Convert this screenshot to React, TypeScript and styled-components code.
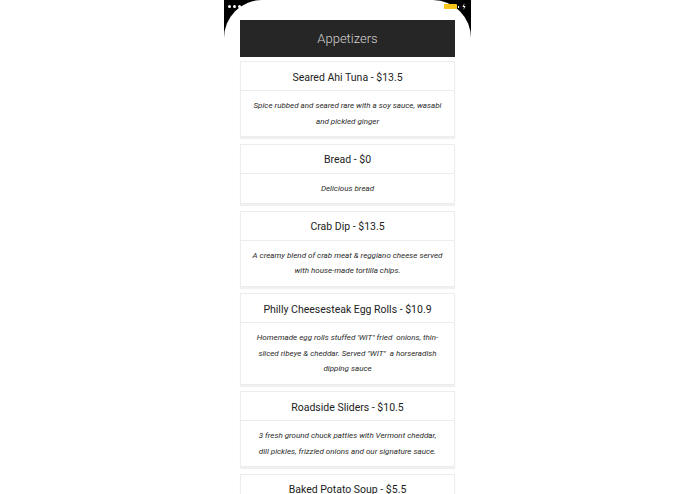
import React from "react";
import styled, { createGlobalStyle } from "styled-components";

const Global = createGlobalStyle`
  html, body { margin: 0; padding: 0; background: #ffffff; }
  body { font-family: Roboto, "Liberation Sans", Arial, sans-serif; }
  * { box-sizing: border-box; }
`;

const Page = styled.div`
  width: 695px;
  height: 494px;
  overflow: hidden;
  display: flex;
  justify-content: center;
`;

const Phone = styled.div`
  width: 247px;
  height: 494px;
  background: linear-gradient(#000 0, #000 40px, #fff 40px);
  position: relative;
`;

const Screen = styled.div`
  height: 100%;
  background: #fff;
  border-radius: 38px 38px 0 0;
  padding: 20px 16px 0 16px;
  display: flex;
  flex-direction: column;
`;

const StatusLeft = styled.div`
  position: absolute;
  left: 4px;
  top: 5px;
  display: flex;
  gap: 2px;
`;

const Dot = styled.span`
  width: 3px;
  height: 3px;
  border-radius: 50%;
  background: #fff;
`;

const StatusRight = styled.div`
  position: absolute;
  right: 5px;
  top: 3px;
  display: flex;
  align-items: center;
  gap: 1px;
`;

const Battery = styled.span`
  width: 13px;
  height: 5px;
  border-radius: 1px;
  background: #f5c518;
`;

const BatteryTip = styled.span`
  width: 1px;
  height: 2px;
  background: #fff;
  margin-right: 2px;
`;

const Header = styled.div`
  height: 37px;
  background: #262626;
  color: #d2d2d2;
  font-family: Roboto, "Liberation Sans", sans-serif;
  font-weight: 300;
  font-size: 13px;
  display: flex;
  align-items: center;
  justify-content: center;
  flex-shrink: 0;
`;

const List = styled.div`
  display: flex;
  flex-direction: column;
  gap: 6.5px;
  padding-top: 4px;
`;

const Card = styled.div`
  background: #fff;
  border: 1px solid #ececec;
  box-shadow: 0 2px 1px rgba(0, 0, 0, 0.06);
  flex-shrink: 0;
`;

const Title = styled.div`
  height: 29px;
  padding-top: 2px;
  display: flex;
  align-items: center;
  justify-content: center;
  font-family: Roboto, "Liberation Sans", sans-serif;
  font-size: 10.5px;
  color: #222;
  border-bottom: 1px solid #ececec;
`;

const Desc = styled.div`
  padding: 7px 8px;
  font-family: Roboto, "Liberation Sans", sans-serif;
  font-size: 8px;
  line-height: 15.5px;
  font-style: italic;
  color: #2a2a2a;
  text-align: center;
`;

const Line = styled.div`
  white-space: pre;
`;

const items = [
  {
    title: "Seared Ahi Tuna - $13.5",
    lines: ["Spice rubbed and seared rare with a soy sauce, wasabi", "and pickled ginger"],
  },
  { title: "Bread - $0", lines: ["Delicious bread"] },
  {
    title: "Crab Dip - $13.5",
    lines: ["A creamy blend of crab meat & reggiano cheese served", "with house-made tortilla chips."],
  },
  {
    title: "Philly Cheesesteak Egg Rolls - $10.9",
    lines: [
      "Homemade egg rolls stuffed 'WIT\" fried  onions, thin-",
      "sliced ribeye & cheddar. Served \"WIT\"  a horseradish",
      "dipping sauce",
    ],
  },
  {
    title: "Roadside Sliders - $10.5",
    lines: [
      "3 fresh ground chuck patties with Vermont cheddar,",
      "dill pickles, frizzled onions and our signature sauce.",
    ],
  },
  {
    title: "Baked Potato Soup - $5.5",
    lines: ["Creamy potato soup topped with bacon, cheddar", "and scallions."],
  },
];

export default function App() {
  return (
    <>
      <Global />
      <Page>
        <Phone>
          <StatusLeft>
            <Dot />
            <Dot />
            <Dot />
          </StatusLeft>
          <StatusRight>
            <Battery />
            <BatteryTip />
            <svg width="4" height="7" viewBox="0 0 4 7">
              <path d="M2.5 0 L0.5 4 H2 L1.5 7 L3.5 3 H2 Z" fill="#fff" />
            </svg>
          </StatusRight>
          <Screen>
            <Header>Appetizers</Header>
            <List>
              {items.map((it) => (
                <Card key={it.title}>
                  <Title>{it.title}</Title>
                  <Desc>
                    {it.lines.map((l, i) => (
                      <Line key={i}>{l}</Line>
                    ))}
                  </Desc>
                </Card>
              ))}
            </List>
          </Screen>
        </Phone>
      </Page>
    </>
  );
}
